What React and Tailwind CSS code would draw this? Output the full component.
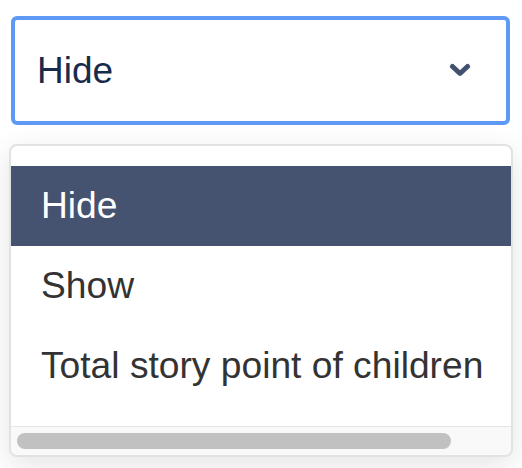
import React from 'react';

const options = ['Hide', 'Show', 'Total story point of children'];

const Chevron = () => (
    <svg width="22" height="15" viewBox="0 0 22 15" fill="none">
        <path d="M3.5 3.5 L11 10.5 L18.5 3.5" stroke="#42526e" strokeWidth="5" strokeLinecap="round" strokeLinejoin="round" />
    </svg>
);

export default function App() {
    const selected = 'Hide';

    return (
        <div className="w-[522px] h-[468px] bg-white overflow-hidden font-['Liberation_Sans',Arial,sans-serif]">
            {/* Select control */}
            <div className="pt-4 pl-[11px]">
                <div className="w-[499px] h-[109px] border-4 border-[#5f99f6] rounded-md flex items-center justify-between pl-[22px] pr-[35px]">
                    <span className="text-[37px] text-[#172b4d] leading-none">{selected}</span>
                    <Chevron />
                </div>
            </div>

            {/* Menu */}
            <div className="mt-[19px] ml-[9px] w-[504px] h-[313px] bg-white border-2 border-[#e2e2e2] rounded-lg shadow-[0_8px_30px_rgba(0,0,0,0.11)] overflow-hidden flex flex-col">
                <div className="pt-5 pb-5 flex-1">
                    {options.map(opt => (
                        <div
                            key={opt}
                            className={`h-20 flex items-center pl-[30px] text-[37.2px] leading-none whitespace-nowrap ${opt === selected ? 'bg-[#455270] text-white' : 'text-[#333333]'}`}
                        >
                            {opt}
                        </div>
                    ))}
                </div>
                <div className="h-[29px] bg-[#f9f9f9] border-t border-[#e6e6e6] flex items-center pl-[6px]">
                    <div className="w-[434px] h-4 rounded-full bg-[#c1c1c1]" />
                </div>
            </div>
        </div>
    );
}
